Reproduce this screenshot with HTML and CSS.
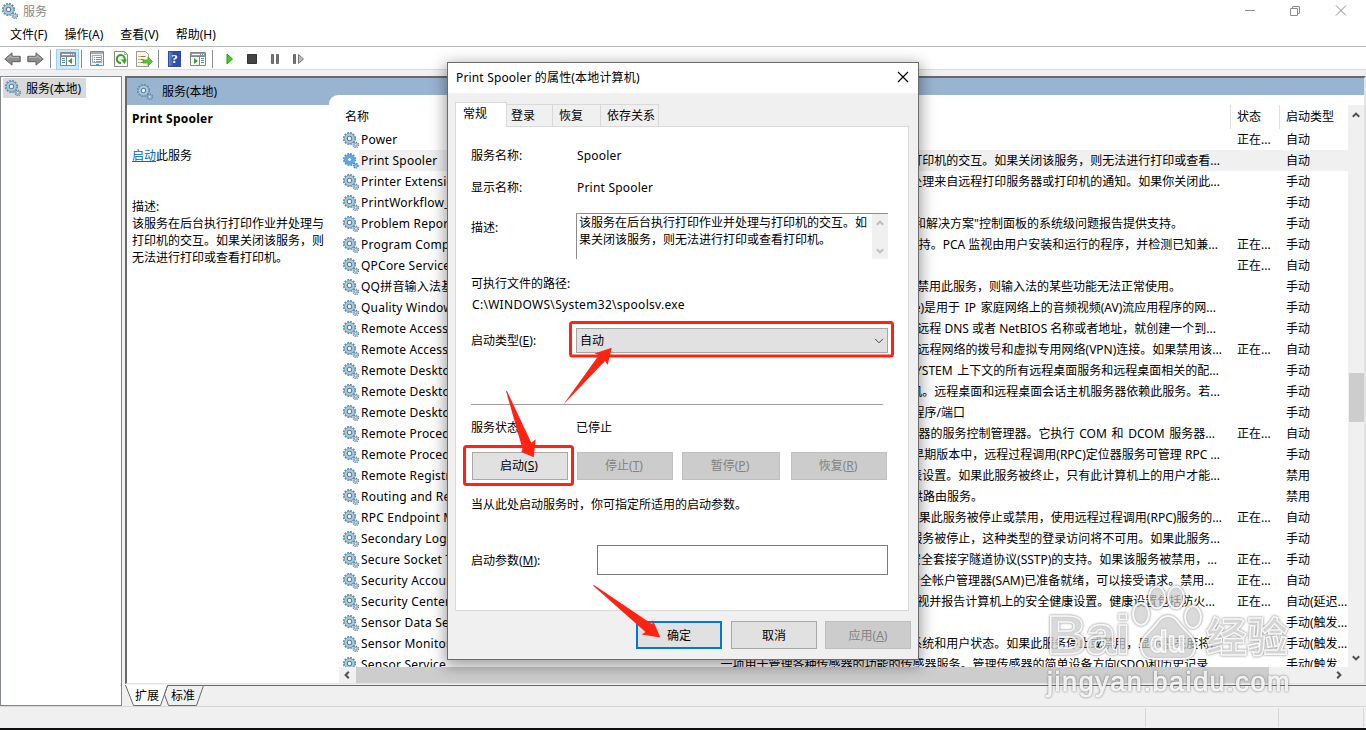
FILE: index.html
```
<!DOCTYPE html>
<html lang="zh-CN">
<head>
    <meta charset="UTF-8">
    <meta name="viewport" content="width=device-width, initial-scale=1.0">
    <title>服务</title>
    <link rel="stylesheet" href="styles.css">
</head>
<body>
    <svg class="defs" width="0" height="0">
        <symbol id="gear" viewBox="0 0 16 16">
            <circle cx="6.5" cy="6.5" r="5.6" fill="none" stroke="#6787a3" stroke-width="2" stroke-dasharray="1.8 1.12"/>
            <circle cx="6.5" cy="6.5" r="3.8" fill="none" stroke="#a6cde4" stroke-width="3"/>
            <circle cx="6.5" cy="6.5" r="5.1" fill="none" stroke="#6f97b5" stroke-width=".9"/>
            <circle cx="6.5" cy="6.5" r="2.2" fill="#fff" stroke="#647d92" stroke-width="1.1"/>
            <circle cx="12.8" cy="12.8" r="2.5" fill="none" stroke="#6484a0" stroke-width="1.7" stroke-dasharray="1.1 .86"/>
            <circle cx="12.8" cy="12.8" r="1.4" fill="#e4f2f9" stroke="#8fb0c7" stroke-width="1.2"/>
        </symbol>
        <symbol id="gear-sel" viewBox="0 0 16 16">
            <circle cx="6.5" cy="6.5" r="5.6" fill="none" stroke="#3c86cf" stroke-width="1.8" stroke-dasharray="1.8 1.12"/>
            <circle cx="6.5" cy="6.5" r="3.8" fill="none" stroke="#5aa6e6" stroke-width="3.4"/>
            <circle cx="6.5" cy="6.5" r="2" fill="#fff" stroke="#3c86cf" stroke-width=".8"/>
            <circle cx="12.8" cy="12.8" r="2.2" fill="#8cc1ee" stroke="#3c86cf" stroke-width="1.6" stroke-dasharray="1.1 .86"/>
        </symbol>
        <symbol id="arrow" viewBox="0 0 17 14">
            <path d="M.8 7 8 .9v3.4h8.2v5.4H8v3.4z" fill="#8e8e8e" stroke="#606060"/>
            <path d="M3 7l4-3.3V5.400h8" fill="none" stroke="#b9b9b9"/>
        </symbol>
        <symbol id="up" viewBox="0 0 8 6"><path d="M.8 4.800 4 1.600l3.200 3.200" fill="none" stroke="currentColor" stroke-width="2"/></symbol>
    </svg>

    <div class="window">
        <div class="titlebar">
            <svg class="title-icon"><use href="#gear"/></svg>
            <span class="title-text">服务</span>
            <svg class="win-controls" width="106" height="14" viewBox="0 0 106 14" fill="none" stroke="#8c8c8c">
                <path d="M0 7.500h10"/>
                <path d="M45.500 5.500h7v7h-7zM47.500 5.500v-2h7v7h-2"/>
                <path d="M91 2.500l10 10m0-10l-10 10"/>
            </svg>
        </div>

        <div class="menubar">
            <span>文件(F)</span><span>操作(A)</span><span>查看(V)</span><span>帮助(H)</span>
        </div>

        <div class="toolbar">
            <svg class="tool-back" width="17" height="14"><use href="#arrow"/></svg>
            <svg class="tool-next" width="17" height="14"><use href="#arrow"/></svg>
            <i class="sep"></i>
            <span class="tool-active">
                <svg width="16" height="14" viewBox="0 0 16 14">
                    <path d="M.5.5h15v13H.5z" fill="#fff" stroke="#7d8790"/>
                    <path d="M1 1h14v3H1z" fill="#8e9aa5"/><path d="M2 2.500h8m1 0h1m1 0h1" stroke="#fff"/>
                    <path d="M1 4.500h14M6.500 5v8" stroke="#7d8790"/><path d="M2 6.500h3M2 8.500h3M2 10.500h3" stroke="#5585bd"/>
                    <path d="M12 6v6L8 9z" fill="#36a51d"/>
                </svg>
            </span>
            <i class="sep sep-near"></i>
            <svg class="tool-props" width="16" height="16" viewBox="0 0 16 16">
                <path d="M1.500.5h13v14h-13z" fill="#edf0f2" stroke="#82888e"/>
                <path d="M2 2h12" stroke="#a5adb4" stroke-width="2"/><path d="M3.500 4.500h9v7h-9z" fill="#fff" stroke="#9fabb5"/>
                <path d="M5 6.500h1m1 0h5M5 8.500h1m1 0h5M5 10.500h1m1 0h5" stroke="#7891a8"/><path d="M7 13.500h3" stroke="#3b9ed6"/>
            </svg>
            <svg class="tool-refresh" width="14" height="16" viewBox="0 0 14 16">
                <path d="M.5.5h10l3 3v12H.5z" fill="#fafafa" stroke="#8b8b8b"/><path d="M10.500.5v3h3" fill="none" stroke="#aaa"/>
                <path d="M10.500 9.500A4 4 0 1 0 7 12" fill="none" stroke="#35a51f" stroke-width="2"/><path d="M7 8.500h6L10.500 13z" fill="#35a51f"/>
            </svg>
            <svg class="tool-export" width="17" height="16" viewBox="0 0 17 16">
                <path d="M.5.5h9l3 3v12H.5z" fill="#fdf8db" stroke="#999"/>
                <path d="M2.500 5.500h1m1 0h5M2.500 8.500h1m1 0h3M2.500 11.500h1m1 0h3" stroke="#7b776a"/>
                <path d="M7 9h5V6l4.500 4.500L12 15v-3H7z" fill="#5ec437" stroke="#3b9e21" stroke-width=".7"/>
            </svg>
            <i class="sep sep-wide"></i>
            <span class="tool-help">?</span>
            <svg class="tool-pane" width="16" height="14" viewBox="0 0 16 14">
                <path d="M.5.5h15v13H.5z" fill="#fff" stroke="#7d8790"/>
                <path d="M1 1h14v3H1z" fill="#8e9aa5"/><path d="M2 2.500h8m1 0h1m1 0h1" stroke="#fff"/>
                <path d="M1 4.500h14M9.500 5v8" stroke="#7d8790"/><path d="M11 6.500h3M11 8.500h3M11 10.500h3" stroke="#5585bd"/>
                <path d="M4 6v6l4-3z" fill="#36a51d"/>
            </svg>
            <i class="sep sep-last"></i>
            <svg class="tool-run" width="80" height="12" viewBox="0 0 80 12">
                <path d="M1 1v10l5.500-5z" fill="#4cc82c" stroke="#239b10"/>
                <path d="M21.500 1.500h9v9h-9z" fill="#444" stroke="#333"/>
                <path d="M45.500 1.500h2v9h-2zM50.500 1.500h2v9h-2z" fill="#777" stroke="#666"/>
                <path d="M67.500 1.500h2v9h-2z" fill="#777" stroke="#666"/><path d="M72.500 1.500v9L77.500 6z" fill="#bbb" stroke="#777"/>
            </svg>
        </div>

        <div class="workspace">
            <div class="tree">
                <div class="tree-item"><svg><use href="#gear"/></svg><span>服务(本地)</span></div>
            </div>

            <div class="content">
                <div class="pane">
                    <div class="pane-header"><svg><use href="#gear"/></svg><span>服务(本地)</span></div>
                    <div class="pane-body">
                        <div class="detail">
                            <h2>Print Spooler</h2>
                            <p class="action"><a>启动</a>此服务</p>
                            <p>描述:</p>
                            <p>该服务在后台执行打印作业并处理与打印机的交互。如果关闭该服务，则无法进行打印或查看打印机。</p>
                        </div>
                        <div class="list">
                            <div class="list-main">
                                <div class="list-head"><span>名称</span><span></span><span>状态</span><span>启动类型</span></div>
                                <div class="rows">
                                    <div class="row"><svg><use href="#gear"/></svg><b>Power</b><p></p><i>正在...</i><em>自动</em></div>
                                    <div class="row selected"><svg><use href="#gear-sel"/></svg><b>Print Spooler</b><p style="--end:10px">打印机的交互。如果关闭该服务，则无法进行打印或查看...</p><i></i><em>自动</em></div>
                                    <div class="row"><svg><use href="#gear"/></svg><b>Printer Extensions</b><p style="--end:10px">处理来自远程打印服务器或打印机的通知。如果你关闭此...</p><i></i><em>手动</em></div>
                                    <div class="row"><svg><use href="#gear"/></svg><b>PrintWorkflow_</b><p></p><i></i><em>手动</em></div>
                                    <div class="row"><svg><use href="#gear"/></svg><b>Problem Reports</b><p style="--end:47px">和解决方案"控制面板的系统级问题报告提供支持。</p><i></i><em>手动</em></div>
                                    <div class="row"><svg><use href="#gear"/></svg><b>Program Compat</b><p style="--end:12px">支持。PCA 监视由用户安装和运行的程序，并检测已知兼...</p><i>正在...</i><em>手动</em></div>
                                    <div class="row"><svg><use href="#gear"/></svg><b>QPCore Service</b><p></p><i>正在...</i><em>自动</em></div>
                                    <div class="row"><svg><use href="#gear"/></svg><b>QQ拼音输入法基础</b><p style="--end:49px">果禁用此服务，则输入法的某些功能无法正常使用。</p><i></i><em>手动</em></div>
                                    <div class="row"><svg><use href="#gear"/></svg><b>Quality Windows</b><p class="wide" style="--end:14px">e)是用于 IP 家庭网络上的音频视频(AV)流应用程序的网...</p><i></i><em>手动</em></div>
                                    <div class="row"><svg><use href="#gear"/></svg><b>Remote Access A</b><p style="--end:14px">远程 DNS 或者 NetBIOS 名称或者地址，就创建一个到...</p><i></i><em>手动</em></div>
                                    <div class="row"><svg><use href="#gear"/></svg><b>Remote Access C</b><p style="--end:8px">远程网络的拨号和虚拟专用网络(VPN)连接。如果禁用该...</p><i>正在...</i><em>自动</em></div>
                                    <div class="row"><svg><use href="#gear"/></svg><b>Remote Desktop</b><p class="wide" style="--end:11px">SYSTEM 上下文的所有远程桌面服务和远程桌面相关的配...</p><i></i><em>手动</em></div>
                                    <div class="row"><svg><use href="#gear"/></svg><b>Remote Desktop</b><p style="--end:10px">机。远程桌面和远程桌面会话主机服务器依赖此服务。若...</p><i></i><em>手动</em></div>
                                    <div class="row"><svg><use href="#gear"/></svg><b>Remote Desktop</b><p style="--end:265px">程序/端口</p><i></i><em>手动</em></div>
                                    <div class="row"><svg><use href="#gear"/></svg><b>Remote Procedure</b><p class="wide" style="--end:15px">务器的服务控制管理器。它执行 COM 和 DCOM 服务器...</p><i>正在...</i><em>自动</em></div>
                                    <div class="row"><svg><use href="#gear"/></svg><b>Remote Procedure</b><p style="--end:10px">早期版本中，远程过程调用(RPC)定位器服务可管理 RPC ...</p><i></i><em>手动</em></div>
                                    <div class="row"><svg><use href="#gear"/></svg><b>Remote Registry</b><p style="--end:10px">表设置。如果此服务被终止，只有此计算机上的用户才能...</p><i></i><em>禁用</em></div>
                                    <div class="row"><svg><use href="#gear"/></svg><b>Routing and Remote</b><p style="--end:247px">供路由服务。</p><i></i><em>禁用</em></div>
                                    <div class="row"><svg><use href="#gear"/></svg><b>RPC Endpoint Mapper</b><p style="--end:8px">果此服务被停止或禁用，使用远程过程调用(RPC)服务的...</p><i>正在...</i><em>自动</em></div>
                                    <div class="row"><svg><use href="#gear"/></svg><b>Secondary Logon</b><p style="--end:10px">服务被停止，这种类型的登录访问将不可用。如果此服务...</p><i></i><em>手动</em></div>
                                    <div class="row"><svg><use href="#gear"/></svg><b>Secure Socket T</b><p style="--end:13px">安全套接字隧道协议(SSTP)的支持。如果该服务被禁用，...</p><i>正在...</i><em>手动</em></div>
                                    <div class="row"><svg><use href="#gear"/></svg><b>Security Accounts</b><p style="--end:16px">安全帐户管理器(SAM)已准备就绪，可以接受请求。禁用...</p><i>正在...</i><em>自动</em></div>
                                    <div class="row"><svg><use href="#gear"/></svg><b>Security Center</b><p style="--end:15px">监视并报告计算机上的安全健康设置。健康设置包括防火...</p><i>正在...</i><em>自动(延迟...</em></div>
                                    <div class="row"><svg><use href="#gear"/></svg><b>Sensor Data Service</b><p></p><i></i><em>手动(触发...</em></div>
                                    <div class="row"><svg><use href="#gear"/></svg><b>Sensor Monitoring</b><p style="--end:10px">系统和用户状态。如果此服务停止或禁用，显示器亮度将...</p><i></i><em>手动(触发...</em></div>
                                    <div class="row"><svg><use href="#gear"/></svg><b>Sensor Service</b><p style="--end:12px">一项用于管理各种传感器的功能的传感器服务。管理传感器的简单设备方向(SDO)和历史记录...</p><i></i><em>手动(触发...</em></div>
                                </div>
                            </div>
                            <div class="vscroll"><svg><use href="#up"/></svg><div class="vthumb"></div><svg class="down"><use href="#up"/></svg></div>
                            <div class="hscroll"><svg class="left"><use href="#up"/></svg><div class="hthumb"></div><svg class="right"><use href="#up"/></svg></div>
                        </div>
                    </div>
                </div>
                <div class="view-tabs">
                    <svg width="80" height="22" viewBox="0 0 80 22">
                        <path d="M42.500.5h36l-7 20h-28l-4-11z" fill="#f0f0f0" stroke="#696969"/>
                        <path d="M.5 0l8 20.500h27L42.500 0z" fill="#fff"/><path d="M.5 0l8 20.500h27L42.500.5" fill="none" stroke="#696969"/>
                        <text x="10" y="15">扩展</text><text x="46" y="15">标准</text>
                    </svg>
                </div>
            </div>
        </div>

        <div class="statusbar"><span></span><span></span><span></span></div>
    </div>

    <div class="dialog">
        <div class="dialog-title">
            <span>Print Spooler 的属性(本地计算机)</span>
            <svg width="12" height="12" viewBox="0 0 12 12"><path d="M1 1l10 10M11 1L1 11" stroke="#000" stroke-width="1.200"/></svg>
        </div>
        <div class="tabs"><span class="current">常规</span><span>登录</span><span>恢复</span><span>依存关系</span></div>
        <div class="sheet">
            <div class="field"><label>服务名称:</label><span class="value">Spooler</span></div>
            <div class="field display-name"><label>显示名称:</label><span class="value">Print Spooler</span></div>
            <div class="field description">
                <label>描述:</label>
                <div class="memo">
                    <p>该服务在后台执行打印作业并处理与打印机的交互。如果关闭该服务，则无法进行打印或查看打印机。</p>
                    <div class="memo-scroll"><svg><use href="#up"/></svg><svg class="down"><use href="#up"/></svg></div>
                </div>
            </div>
            <div class="line path-label">可执行文件的路径:</div>
            <div class="line path">C:\WINDOWS\System32\spoolsv.exe</div>
            <div class="field startup">
                <label>启动类型(<u>E</u>):</label>
                <div class="combo"><span>自动</span><svg width="10" height="6" viewBox="0 0 10 6"><path d="M1 .8l4 4 4-4" fill="none" stroke="#444"/></svg></div>
            </div>
            <hr>
            <div class="field state"><label>服务状态:</label><span>已停止</span></div>
            <div class="actions">
                <div class="btn">启动(<u>S</u>)</div>
                <div class="btn disabled">停止(<u>T</u>)</div>
                <div class="btn disabled pause">暂停(<u>P</u>)</div>
                <div class="btn disabled resume">恢复(<u>R</u>)</div>
            </div>
            <div class="line note">当从此处启动服务时，你可指定所适用的启动参数。</div>
            <div class="field params"><label>启动参数(<u>M</u>):</label><div class="input"></div></div>
        </div>
        <div class="dialog-buttons">
            <div class="btn default">确定</div>
            <div class="btn">取消</div>
            <div class="btn disabled">应用(<u>A</u>)</div>
        </div>
    </div>

    <!-- red boxes and arrows over the dialog -->
    <svg class="marks" width="1366" height="730" viewBox="0 0 1366 730">
        <g fill="none" stroke="#ff2313" stroke-width="3">
            <rect x="570.500" y="322.500" width="322" height="33.500" rx="2"/>
            <rect x="464.500" y="446.500" width="108" height="38" rx="2"/>
        </g>
        <g fill="#ff2313">
            <path d="M563 405 599 355l-4.500-1.500 17.200-5.800-4 17.300-2.700-4z"/>
            <path d="M506 391 522.500 449l-1.200 3 12.400 5.200 2-18-4.400 3.500L507 391z"/>
            <path d="M593 585.500 645.500 632l-3.800 2.500 18.600 3-7.600-17.800-.5 4.500L594 585z"/>
        </g>
    </svg>

    <div class="watermark">
        <div class="wm-brand">
            <span class="wm-bai">Bai</span>
            <span class="wm-paw">
                <svg width="75" height="80" viewBox="0 0 75 80">
                    <ellipse cx="10" cy="29" rx="8" ry="11"/><ellipse cx="26" cy="12.500" rx="8" ry="11"/>
                    <ellipse cx="45" cy="12.500" rx="8" ry="11"/><ellipse cx="62" cy="32" rx="8" ry="11"/>
                    <path d="M37 31c8 0 10 7 17 14s11 10 10 18c-1 9-8 11-13 11H23c-6 0-12-3-13-11-1-7 4-12 10-18 7-7 9-14 17-14z"/>
                </svg>
                <em>du</em>
            </span>
            <span class="wm-cn">经验</span>
        </div>
        <div class="wm-url">jingyan.baidu.com</div>
    </div>
</body>
</html>
```
FILE: styles.css
```
:root{
    --face:#f0f0f0;
    --line:#d9d9d9;
    --dark:#696969;
    --accent:#0078d7;
}

*{margin:0;padding:0;box-sizing:border-box;}
body{
    width:1366px;height:730px;overflow:hidden;position:relative;
    background:var(--face);color:#000;
    font-family:"Noto Sans","Noto Sans CJK SC",sans-serif;
    font-size:12px;line-height:17px;
}
svg{display:block;flex-shrink:0;}
i,em{font-style:normal;}
b{font-weight:400;}
.defs{position:absolute;}

/* ===== window frame ===== */
.window{display:flex;flex-direction:column;height:730px;}
.titlebar{height:22px;background:#fff;display:flex;align-items:center;padding-left:2px;}
.title-icon{width:16px;height:16px;}
.title-text{margin-left:5px;color:#888;}
.win-controls{margin:-3px 15px 0 auto;}
.menubar{height:25px;background:#fff;border-bottom:1px solid #b8b8b8;display:flex;gap:17px;padding:4px 0 0 10px;}
.toolbar{height:23px;background:#fff;border-bottom:1px solid #dcdcdc;display:flex;align-items:center;padding:2px 0 0 4px;}
.tool-next{margin-left:6px;transform:scaleX(-1);}
.sep{width:1px;height:18px;background:#8d8d8d;margin-left:6px;}
.tool-active{
    width:23px;height:21px;margin-left:5px;background:#cce8ff;border:1px solid #99d1ff;
    display:flex;align-items:center;justify-content:center;
}
.sep-near{margin-left:2px;}
.tool-props{margin-left:7px;}
.tool-refresh{margin-left:9px;}
.tool-export{margin-left:8px;}
.sep-wide{margin-left:5px;}
.tool-help{
    width:13px;height:16px;margin-left:9px;background:linear-gradient(90deg,#6d87d3,#2f4fae 40%);border:1px solid #304a9c;
    color:#fff;font:bold 13px/14px "Liberation Serif",serif;text-align:center;
}
.tool-pane{margin-left:9px;}
.sep-last{margin-left:6px;}
.tool-run{margin-left:13px;}

/* ===== work area ===== */
.workspace{height:636px;padding-top:6px;display:flex;gap:3px;}
.tree{width:122px;height:630px;background:#fff;border:1px solid #828790;padding:1px 0 0 2px;}
.tree-item{width:83px;height:20px;background:var(--line);display:flex;align-items:center;padding-left:2px;}
.tree-item svg{width:16px;height:16px;}
.tree-item span{margin-left:5px;}
.content{flex:1;}
.pane{height:608px;background:#fff;border:2px solid;border-color:var(--dark) #e3e3e3 #e3e3e3 var(--dark);border-bottom-width:1px;}
.pane-header{height:27px;background:#99b4d1;display:flex;align-items:center;padding-left:10px;}
.pane-header svg{width:16px;height:16px;}
.pane-header span{margin-left:9px;}
.pane-body{height:578px;display:flex;}
.detail{width:202px;padding:5px 0 0 5px;}
.detail h2{font-size:12px;font-weight:700;line-height:17px;letter-spacing:.25px;margin-bottom:20px;}
.detail .action{margin-bottom:34px;}
.detail a{color:#0066cc;text-decoration:underline;}
.list{
    flex:1;margin-top:-10px;background:#fff;border-radius:9px 0 0 0;padding:10px 0 0 14px;
    display:grid;grid-template-columns:1fr 16px;grid-template-rows:562px 16px;
}
.list-main{overflow:hidden;}
.list-head{height:24px;display:grid;grid-template-columns:376px 511px 49px 1fr;line-height:24px;}
.list-head span{padding-left:2px;}
.list-head span:nth-child(n+3){border-left:1px solid #e0e0e0;padding-left:6px;}
.rows{overflow:hidden;}
.row{height:21px;display:grid;grid-template-columns:18px 358px 511px 49px 1fr;align-items:center;white-space:nowrap;line-height:21px;}
.row svg{width:16px;height:16px;}
.row b{letter-spacing:.22px;}
.row p{text-align:right;padding-right:var(--end,0);}
.row .wide{word-spacing:1.6px;}
.row i,.row em{padding-left:7px;}
.row.selected{background:linear-gradient(var(--face),var(--face)) 16px 0 no-repeat;}
.vscroll{background:var(--face);display:flex;flex-direction:column;align-items:center;padding-top:7px;color:#505050;}
.vscroll svg,.memo-scroll svg,.hscroll svg{width:8px;height:6px;}
.vthumb{width:15px;height:49px;background:#cdcdcd;margin-top:255px;}
.down{transform:rotate(180deg);}
.vscroll .down{margin-top:233px;}
.hscroll{grid-column:1/-1;background:var(--face);margin-left:-4px;display:flex;align-items:center;padding-left:4px;color:#505050;}
.left{transform:rotate(-90deg);}
.right{transform:rotate(90deg);}
.hthumb{width:913px;height:16px;background:#cdcdcd;margin-left:5px;}
.hscroll .right{margin-left:66px;}
.view-tabs{height:22px;margin-top:1px;background:linear-gradient(var(--dark),var(--dark)) 42px 0/100% 1px no-repeat;}
.view-tabs text{font-size:12px;}

.statusbar{height:22px;border-top:1px solid #d7d7d7;display:flex;justify-content:flex-end;padding:1px 2px 1px 0;}
.statusbar span{border-right:1px solid #d7d7d7;width:133px;}
.statusbar span:last-child{width:85px;}
.window::after{content:'';height:2px;background:#120d12;}

/* ===== properties dialog ===== */
.dialog{
    position:absolute;left:447px;top:62px;width:472px;height:598px;
    background:var(--face);border:1px solid #6b6b6b;box-shadow:0 4px 14px 2px rgba(0,0,0,.38);
}
.dialog-title{height:30px;background:#fff;display:flex;justify-content:space-between;align-items:center;padding:0 9px 0 8px;}
.dialog-title span{letter-spacing:.16px;margin-top:-1px;}
.dialog-title svg{margin-top:-2px;}
.tabs{display:flex;align-items:flex-end;height:33px;padding-left:7px;}
.tabs span{height:22px;border:1px solid var(--line);border-bottom:0;border-left:0;padding:2px 0 0 4px;width:46px;}
.tabs .current{width:52px;height:25px;border-left:1px solid var(--line);background:#fff;padding:2px 0 0 7px;margin-bottom:-1px;position:relative;z-index:1;}
.tabs span:nth-child(3){width:48px;padding-left:6px;}
.tabs span:nth-child(4){width:58px;padding-left:6px;}
.sheet{width:454px;height:485px;margin-left:7px;background:#fff;border:1px solid var(--line);padding:18px 0 0 15px;}
.field{display:flex;align-items:center;height:20px;}
.field label{width:106px;}
.value{letter-spacing:.2px;}
.display-name{margin-top:12px;}
.description{height:46px;margin-top:16px;}
.description label{margin:-18px -1px 0 0;}
.memo{width:312px;height:46px;border:1px solid #8c8c8c;border-right:0;border-bottom:0;display:flex;}
.memo p{width:295px;padding-left:2px;}
.memo-scroll{width:16px;background:var(--face);color:#bdbdbd;display:flex;flex-direction:column;justify-content:space-between;align-items:center;padding:6px 0 5px;}
.line{height:20px;line-height:20px;}
.path-label{margin-top:15px;}
.path{margin-top:1px;padding-left:1px;letter-spacing:.3px;}
.startup{height:25px;margin-top:13px;}
.startup label,.state label{width:105px;}
.combo{width:312px;height:25px;background:#e1e1e1;border:1px solid #a5a5a5;display:flex;align-items:center;justify-content:space-between;padding:0 3px;}
hr{border:0;height:1px;width:412px;background:#a0a0a0;margin-top:51px;}
.state{margin-top:12px;}
.actions{display:flex;margin:15px 0 0 1px;gap:9px;}
.btn{width:96px;height:28px;background:#e1e1e1;border:1px solid #a8a8a8;display:flex;align-items:center;justify-content:center;padding:0 2px 1px 0;}
.btn.disabled{background:#ccc;border-color:#bfbfbf;color:#838383;}
.pause{width:98px;}
.resume{margin-left:2px;}
.note{margin-top:15px;}
.params{height:30px;margin-top:30px;}
.params label{width:126px;}
.input{width:291px;height:30px;border:1px solid #7a7a7a;}
.dialog-buttons{display:flex;justify-content:flex-end;gap:8px;padding:10px 7px 0 0;}
.dialog-buttons .btn{width:86px;padding:0;}
.dialog-buttons .btn:first-child{margin-right:1px;}
.dialog-buttons .default{border:2px solid var(--accent);}
.marks{position:absolute;left:0;top:0;}

/* ===== watermark ===== */
.watermark{
    position:absolute;left:1047px;top:585px;width:250px;
    color:rgba(255,255,255,.5);
    -webkit-text-stroke:1.4px rgba(255,255,255,.9);
    filter:drop-shadow(0 0 1px rgba(80,80,80,.6)) drop-shadow(0 0 1px rgba(120,120,120,.35));
    font-family:"Liberation Sans","Noto Sans CJK SC",sans-serif;
}
.wm-brand{display:flex;height:80px;align-items:flex-end;}
.wm-bai{width:84px;font-size:55px;line-height:60px;font-weight:700;letter-spacing:-1px;}
.wm-paw{width:75px;height:80px;position:relative;}
.wm-paw svg{fill:rgba(255,255,255,.45);stroke:rgba(255,255,255,.9);stroke-width:2;}
.wm-paw em{position:absolute;left:19px;top:42px;font-size:29px;line-height:30px;font-weight:700;}
.wm-cn{font-size:41px;line-height:54px;font-weight:700;white-space:nowrap;}
.wm-url{font-size:27px;line-height:30px;margin-top:2px;letter-spacing:1.55px;white-space:nowrap;-webkit-text-stroke-width:.6px;color:rgba(255,255,255,.85);}
```
